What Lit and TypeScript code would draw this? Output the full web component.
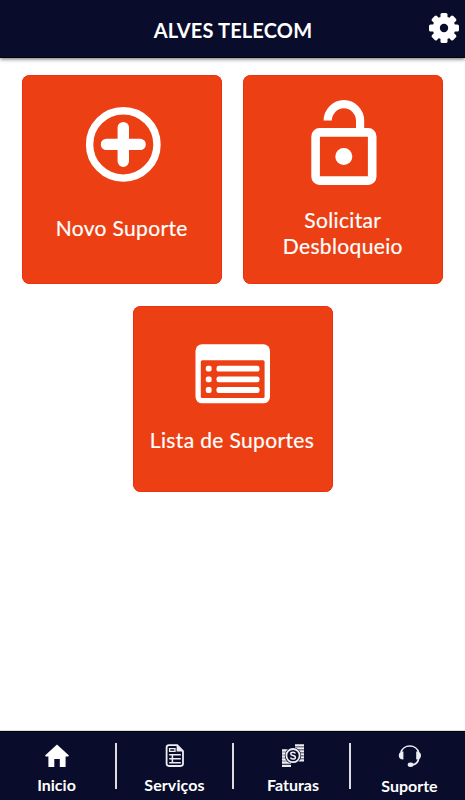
import { LitElement, html, css, svg } from "lit";
import { customElement } from "lit/decorators.js";

const gear = html`<svg width="32" height="32" viewBox="-16 -16 32 32">
  <g fill="#fff">
    <circle r="11.4" />
    ${[0, 45, 90, 135].map(
      (a) => svg`<rect x="-3.5" y="-15" width="7" height="30" rx="1.6" transform=${`rotate(${a})`} />`
    )}
  </g>
  <circle r="4.2" fill="#090c2a" />
</svg>`;

const plus = html`<svg width="76" height="76" viewBox="0 0 76 76">
  <circle cx="38.3" cy="37.4" r="33.7" fill="none" stroke="#fff" stroke-width="7.4" />
  <path d="M38.3 20.6V54.2M21.5 37.4H55.1" stroke="#fff" stroke-width="11.4" stroke-linecap="round" />
</svg>`;

const lock = html`<svg width="66" height="86" viewBox="0 0 66 86">
  <path d="M16.7 20.6A16.2 16.4 0 0 1 49.1 20.6V32" fill="none" stroke="#fff" stroke-width="8.2" />
  <rect x="4.6" y="32.4" width="56.6" height="48.2" rx="4" fill="none" stroke="#fff" stroke-width="8.6" />
  <circle cx="32.8" cy="56.4" r="8.5" fill="#fff" />
</svg>`;

const list = html`<svg width="76" height="60" viewBox="0 0 76 60">
  <rect x=".5" y=".3" width="74.5" height="59" rx="6.5" fill="#fff" />
  <rect x="5.8" y="16.3" width="63.8" height="37.6" rx="1.5" fill="#ec4014" />
  <g fill="#fff">
    ${[24.7, 35.3, 46].map(
      (y) => svg`<rect x="10.8" y=${y - 2.9} width="5.8" height="5.8" rx="2" />
        <rect x="21.5" y=${y - 2.9} width="43" height="5.8" rx="2.2" />`
    )}
  </g>
</svg>`;

const home = html`<svg width="24" height="24" viewBox="0 0 24 24">
  <path d="M12 .4L23.7 11.2Q24 12.4 23 12.4H20.6V22.4Q20.6 23 20 23H14.8V15H9.3V23H4Q3.4 23 3.4 22.4V12.4H1Q0 12.4 .3 11.2Z" fill="#fff" />
</svg>`;

const doc = html`<svg width="24" height="24" viewBox="0 0 24 24">
  <path d="M6 1.2H14.2L20 7V19.6A2.4 2.4 0 0 1 17.6 22H6A2.4 2.4 0 0 1 3.6 19.6V3.6A2.4 2.4 0 0 1 6 1.2Z" fill="none" stroke="#eeeef2" stroke-width="1.8" />
  <path d="M13.6 1L20.3 7.6H13.6Z" fill="#eeeef2" />
  <path d="M6.6 4.6H12V7.4H6.6Z" fill="none" stroke="#eeeef2" stroke-width="1.3" />
  <path d="M6.2 10.7H17.8M6.2 14.7H17.8M6.2 18.7H17.8M9.4 10V19.2" stroke="#eeeef2" stroke-width="1.5" />
</svg>`;

const money = html`<svg width="24" height="24" viewBox="0 0 24 24">
  <path d="M14 1.3H23M14 4.3H23M14 7.3H23M14 10.3H23M14 13.3H23M14 16.3H23M1 6.5H10M1 9.5H10M1 12.5H10M1 15.5H10M1 18.5H10M1 21.8H10" stroke="#eeeef2" stroke-width="2.3" />
  <circle cx="12" cy="11.6" r="8.2" fill="#090c2a" />
  <circle cx="12" cy="11.6" r="6.6" fill="none" stroke="#eeeef2" stroke-width="1.8" />
  <path d="M14.4 9.6Q13.9 8.3 12 8.3Q9.8 8.3 9.8 9.9Q9.8 11.2 12 11.6Q14.4 12 14.4 13.4Q14.4 15 12 15Q9.9 15 9.5 13.5" fill="none" stroke="#eeeef2" stroke-width="1.5" />
</svg>`;

const headset = html`<svg width="24" height="24" viewBox="0 0 24 24">
  <path d="M3 8.5A9 8.2 0 0 1 20.6 8.5M20.8 14Q19.8 20.6 13.5 21" fill="none" stroke="#eeeef2" stroke-width="1.7" />
  <path d="M5.4 7.4V15.6Q.8 15.6 .8 11.5Q.8 7.4 5.4 7.4ZM18.2 7.4V15.6Q23 15.6 23 11.5Q23 7.4 18.2 7.4Z" fill="#eeeef2" />
  <ellipse cx="12.6" cy="20.8" rx="2.9" ry="2.2" fill="#eeeef2" />
</svg>`;

@customElement("app-root")
export class AppRoot extends LitElement {
  static styles = css`
    :host {
      display: flex;
      flex-direction: column;
      height: 800px;
      background: #fff;
      color: #fff;
      font-family: Lato, "Liberation Sans", sans-serif;
      overflow: hidden;
    }
    svg { display: block; flex: none; }
    header {
      box-sizing: border-box;
      height: 58px;
      flex: none;
      display: grid;
      grid-template-columns: 40px 1fr 40px;
      background: #090c2a;
      border-bottom: 1px solid #02030f;
      box-shadow: 0 1px 4px rgba(0, 0, 0, 0.6);
    }
    h1 {
      margin: 17px 0 0 1px;
      font-size: 20px;
      line-height: 26px;
      font-weight: 700;
      letter-spacing: 0.17px;
      text-align: center;
      white-space: nowrap;
    }
    .settings { padding: 12px 0 0 3px; }
    main {
      flex: 1;
      padding-top: 16.6px;
      display: flex;
      flex-wrap: wrap;
      justify-content: center;
      align-content: flex-start;
      gap: 22.3px 20.6px;
    }
    .card {
      box-sizing: border-box;
      width: 200px;
      height: 209.4px;
      border-radius: 8px;
      background: #ec4014;
      box-shadow: inset 0 0 0 0.6px #ee2410;
      display: flex;
      flex-direction: column;
      align-items: center;
      font-size: 21px;
      line-height: 26px;
      text-align: center;
      -webkit-text-stroke: 0.2px #fff;
    }
    .new { padding: 32px 0 0 2px; gap: 32px; letter-spacing: 0.33px; }
    .new span { margin-left: -3px; }
    .unlock { padding: 25px 0 0 3px; gap: 21px; letter-spacing: 0.35px; }
    .unlock span { margin-left: -3px; }
    .tickets { height: 185.6px; padding: 38px 0 0 0; gap: 23px; letter-spacing: 0.36px; }
    .tickets span { margin-left: -1px; }
    nav {
      box-sizing: border-box;
      height: 69px;
      flex: none;
      display: grid;
      grid-template-columns: 117px 117px 117px 114px;
      background: #090c2a;
      border-top: 1px solid #02030f;
      box-shadow: 0 0 1px #333;
    }
    .tab { display: flex; height: 100%; }
    .body {
      flex: 1;
      display: flex;
      flex-direction: column;
      align-items: center;
      padding: 12px 2px 0 0;
      gap: 7px;
      font-size: 16px;
      line-height: 20px;
      font-weight: 700;
    }
    .rule { width: 2px; height: 46px; margin-top: 11px; background: #dcdce2; }
    .services { padding: 12px 0 0 0; letter-spacing: 0.1px; }
    .bills { padding: 12px 0 0 3px; }
    .support { padding: 12px 0 0 3px; gap: 8px; }
  `;

  render() {
    return html`
      <header>
        <span></span>
        <h1>ALVES TELECOM</h1>
        <div class="settings">${gear}</div>
      </header>
      <main>
        <div class="card new">${plus}<span>Novo Suporte</span></div>
        <div class="card unlock">${lock}<span>Solicitar<br />Desbloqueio</span></div>
        <div class="card tickets">${list}<span>Lista de Suportes</span></div>
      </main>
      <nav>
        <div class="tab"><div class="body">${home}<span>Inicio</span></div><i class="rule"></i></div>
        <div class="tab"><div class="body services">${doc}<span>Serviços</span></div><i class="rule"></i></div>
        <div class="tab"><div class="body bills">${money}<span>Faturas</span></div><i class="rule"></i></div>
        <div class="tab"><div class="body support">${headset}<span>Suporte</span></div></div>
      </nav>
    `;
  }
}
